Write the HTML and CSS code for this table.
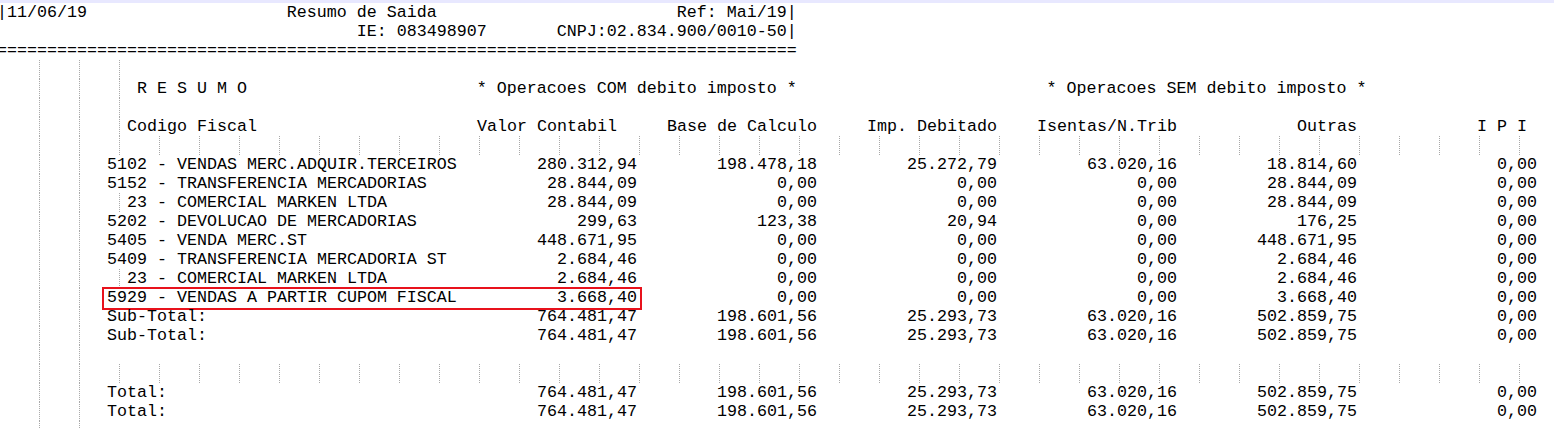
FILE: index.html
```html
<!DOCTYPE html>
<html lang="pt">
<head>
<meta charset="utf-8">
<title>Resumo de Saida</title>
<link rel="stylesheet" href="styles.css">
</head>
<body>
<div class="editor">
  <div class="prev-line"></div>
  <div class="doc">
    <div class="line">|11/06/19                    Resumo de Saida                        Ref: Mai/19|</div>
    <div class="line">                                    IE: 083498907       CNPJ:02.834.900/0010-50|</div>
    <div class="line">================================================================================</div>
    <div class="line"><span class="ind i13"></span></div>
    <div class="line"><span class="ind i14"></span>R E S U M O                       * Operacoes COM debito imposto *                         * Operacoes SEM debito imposto *</div>
    <div class="line"><span class="ind i13"></span></div>
    <div class="row">
      <div class="label"><span class="ind i13"></span>Codigo Fiscal</div>
      <div class="num pad2">Valor Contabil</div>
      <div class="num">Base de Calculo</div>
      <div class="num">Imp. Debitado</div>
      <div class="num">Isentas/N.Trib</div>
      <div class="num">Outras</div>
      <div class="num pad1">I P I</div>
    </div>
    <div class="line"><span class="ind full"></span></div>

    <div class="row">
      <div class="label"><span class="ind i11"></span>5102 - VENDAS MERC.ADQUIR.TERCEIROS</div>
      <div class="num">280.312,94</div><div class="num">198.478,18</div><div class="num">25.272,79</div><div class="num">63.020,16</div><div class="num">18.814,60</div><div class="num">0,00</div>
    </div>
    <div class="row">
      <div class="label"><span class="ind i11"></span>5152 - TRANSFERENCIA MERCADORIAS</div>
      <div class="num">28.844,09</div><div class="num">0,00</div><div class="num">0,00</div><div class="num">0,00</div><div class="num">28.844,09</div><div class="num">0,00</div>
    </div>
    <div class="row">
      <div class="label"><span class="ind i13"></span>23 - COMERCIAL MARKEN LTDA</div>
      <div class="num">28.844,09</div><div class="num">0,00</div><div class="num">0,00</div><div class="num">0,00</div><div class="num">28.844,09</div><div class="num">0,00</div>
    </div>
    <div class="row">
      <div class="label"><span class="ind i11"></span>5202 - DEVOLUCAO DE MERCADORIAS</div>
      <div class="num">299,63</div><div class="num">123,38</div><div class="num">20,94</div><div class="num">0,00</div><div class="num">176,25</div><div class="num">0,00</div>
    </div>
    <div class="row">
      <div class="label"><span class="ind i11"></span>5405 - VENDA MERC.ST</div>
      <div class="num">448.671,95</div><div class="num">0,00</div><div class="num">0,00</div><div class="num">0,00</div><div class="num">448.671,95</div><div class="num">0,00</div>
    </div>
    <div class="row">
      <div class="label"><span class="ind i11"></span>5409 - TRANSFERENCIA MERCADORIA ST</div>
      <div class="num">2.684,46</div><div class="num">0,00</div><div class="num">0,00</div><div class="num">0,00</div><div class="num">2.684,46</div><div class="num">0,00</div>
    </div>
    <div class="row">
      <div class="label"><span class="ind i13"></span>23 - COMERCIAL MARKEN LTDA</div>
      <div class="num">2.684,46</div><div class="num">0,00</div><div class="num">0,00</div><div class="num">0,00</div><div class="num">2.684,46</div><div class="num">0,00</div>
    </div>
    <div class="row">
      <div class="label"><span class="ind i11"></span>5929 - VENDAS A PARTIR CUPOM FISCAL</div>
      <div class="num">3.668,40</div><div class="num">0,00</div><div class="num">0,00</div><div class="num">0,00</div><div class="num">3.668,40</div><div class="num">0,00</div>
      <span class="mark"></span>
    </div>
    <div class="row">
      <div class="label"><span class="ind i11"></span>Sub-Total:</div>
      <div class="num">764.481,47</div><div class="num">198.601,56</div><div class="num">25.293,73</div><div class="num">63.020,16</div><div class="num">502.859,75</div><div class="num">0,00</div>
    </div>
    <div class="row">
      <div class="label"><span class="ind i11"></span>Sub-Total:</div>
      <div class="num">764.481,47</div><div class="num">198.601,56</div><div class="num">25.293,73</div><div class="num">63.020,16</div><div class="num">502.859,75</div><div class="num">0,00</div>
    </div>
    <div class="line"><span class="ind i11"></span></div>
    <div class="line"><span class="ind full"></span></div>
    <div class="row">
      <div class="label"><span class="ind i11"></span>Total:</div>
      <div class="num">764.481,47</div><div class="num">198.601,56</div><div class="num">25.293,73</div><div class="num">63.020,16</div><div class="num">502.859,75</div><div class="num">0,00</div>
    </div>
    <div class="row">
      <div class="label"><span class="ind i11"></span>Total:</div>
      <div class="num">764.481,47</div><div class="num">198.601,56</div><div class="num">25.293,73</div><div class="num">63.020,16</div><div class="num">502.859,75</div><div class="num">0,00</div>
    </div>
    <div class="line"><span class="ind i11"></span></div>
  </div>
</div>
</body>
</html>
```

FILE: styles.css
```css
html, body {
  margin: 0;
  padding: 0;
  background: #ffffff;
}

body {
  overflow: hidden;
  font-family: "Liberation Mono", "Courier New", monospace;
  font-size: 16.664px;
  color: #000000;
}

.editor {
  width: 1554px;
  height: 429px;
  overflow: hidden;
}

.prev-line {
  height: 3px;
  background: #e8e8ff;
}

.doc {
  margin-left: -3px;
}

.line {
  height: 19px;
  line-height: 19px;
  white-space: pre;
}

.row {
  position: relative;
  display: grid;
  grid-template-columns: 460px repeat(6, 180px);
  height: 19px;
  line-height: 19px;
  white-space: pre;
}

.num {
  text-align: right;
}

.pad2 {
  padding-right: 20px;
}

.pad1 {
  padding-right: 10px;
}

.ind {
  display: inline-block;
  vertical-align: top;
  height: 19px;
  background: conic-gradient(from 270deg at 1px 1px, #a8a8a8 0 90deg, transparent 0) 2px 0 / 40px 2px repeat;
}

.i11 { width: 110px; }
.i13 { width: 130px; }
.i14 { width: 140px; }
.full { width: 1540px; }

.mark {
  position: absolute;
  left: 105px;
  top: -1px;
  width: 540px;
  height: 23px;
  box-sizing: border-box;
  border: 2px solid #e8121c;
  pointer-events: none;
}
```
